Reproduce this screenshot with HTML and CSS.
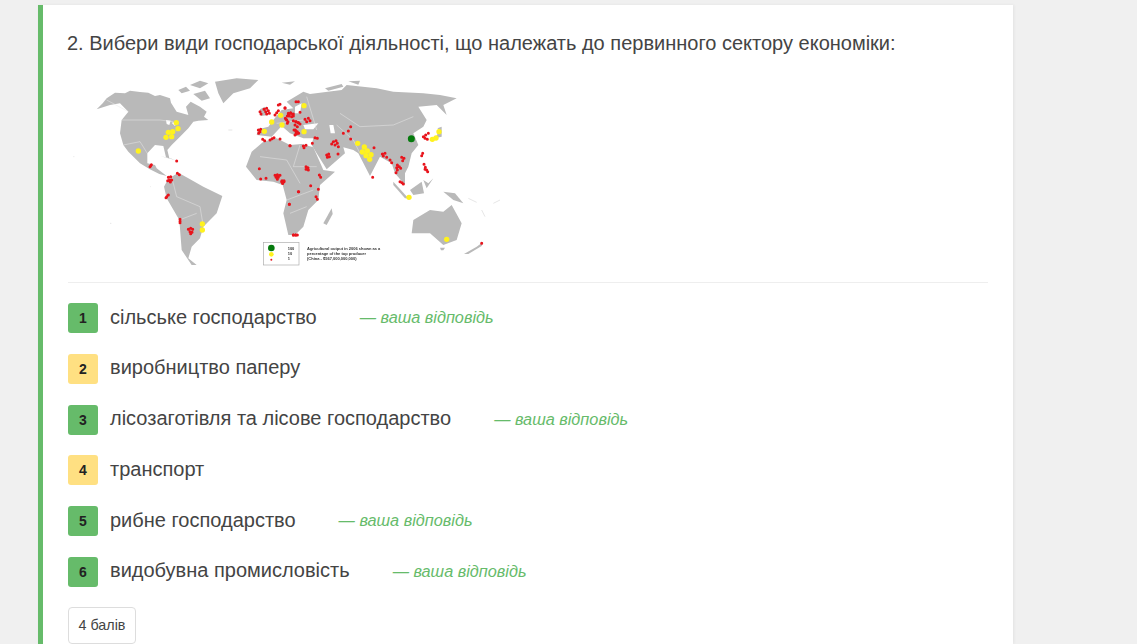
FILE: index.html
```html
<!DOCTYPE html>
<html>
<head>
    <title>Тест</title>
    <link rel="stylesheet" href="styles.css">
</head>
<body>
    <div class="card">
        <p class="question">2. Вибери види господарської діяльності, що належать до первинного сектору економіки:</p>
        <svg class="map" viewBox="24 9 1350 600" width="450" height="200">
            <g class="land">
                <!-- americas -->
                <polygon points="110,118 128,100 140,85 165,68 195,70 210,62 240,66 265,68 285,78 300,75 330,85 333,98 350,125 385,135 378,110 392,95 420,110 440,125 432,140 445,150 415,152 400,155 385,175 360,200 335,225 322,240 328,265 318,262 310,228 285,225 262,250 262,280 285,285 290,295 320,318 298,312 268,297 240,280 205,245 190,225 180,190 185,150 205,125 180,100 150,105"/>
                <polygon points="320,335 335,320 355,308 385,325 430,350 487,378 470,430 430,470 420,505 395,530 385,565 410,585 395,585 365,540 358,450 320,385 312,350"/>
                <polygon points="465,35 530,25 595,30 570,55 520,70 490,100 475,70"/>
                <polygon points="355,60 378,50 390,62 365,70"/>
                <polygon points="390,45 420,32 445,40 420,55"/>
                <polygon points="400,72 435,62 450,85 425,92"/>
                <polygon points="300,258 335,266 345,270 322,264"/>
                <polygon points="665,38 705,34 690,44"/>
                <!-- africa -->
                <polygon points="558,290 575,245 610,215 650,205 690,225 725,222 760,232 790,300 825,305 780,345 775,390 745,420 730,470 705,495 685,495 670,430 680,390 668,345 640,335 590,330"/>
                <!-- eurasia -->
                <polygon points="590,195 595,178 625,170 640,150 665,120 700,115 680,95 730,65 750,72 845,60 860,45 950,55 1000,65 1090,70 1140,75 1190,85 1150,105 1160,135 1130,105 1075,110 1100,150 1090,170 1060,190 1075,225 1055,250 1045,290 1035,310 1035,345 1005,310 995,280 960,260 930,318 895,250 880,240 850,232 855,250 800,298 770,250 755,225 760,205 730,205 690,190 665,168 635,200"/>
                <polygon points="795,55 845,42 850,50 805,62"/>
                <polygon points="865,34 900,32 895,44"/>
                <!-- islands -->
                <polygon points="600,118 615,110 625,135 603,138"/>
                <polygon points="1000,335 1045,385 1035,385 1000,345"/>
                <polygon points="1050,360 1085,335 1092,370 1060,375"/>
                <polygon points="1125,205 1140,180 1132,175 1145,170 1145,200"/>
                <polygon points="1150,365 1185,370 1210,400 1180,390"/>
                <polygon points="1055,490 1060,450 1110,420 1150,425 1175,405 1205,460 1190,510 1150,525 1110,490"/>
                <polygon points="1140,533 1155,533 1150,541 1143,541"/>
                <polygon points="1212,552 1250,530 1270,515 1265,528 1225,552"/>
                <polygon points="790,460 815,415 818,432 800,465"/>
                <polygon points="1090,330 1105,340 1120,325 1100,355"/>
            </g>
            <g class="water">
                <polygon points="318,150 332,152 328,165 320,162"/>
                <polygon points="335,158 350,155 345,168"/>
                <polygon points="730,165 775,160 760,178 735,178"/>
                <polygon points="808,165 820,165 825,190 812,190"/>
                <polygon points="705,110 725,100 720,130 705,130"/>
            </g>
            <path class="borders" d="M185 150L300 150 340 155M205 125L140 90M262 250L240 215 190 225M335 320L350 380 420 410 430 470M358 450L410 430M600 260L680 270 720 340M720 225L700 290 770 290M680 390L760 360M690 430L740 410M840 130L900 170 1000 165 1060 140M830 165L880 210 900 250M740 80L770 180M650 160L730 150"/>
            <path class="specks" d="M1225 385l25 12M1265 420l10 20M1300 400l20 -10M40 260h3M505 180h12M270 350h2M150 460h4"/>
            <path class="dots-red" d="M600 125h.1M603 132h.1M612 118h.1M620 115h.1M617 125h.1M625 122h.1M620 132h.1M628 130h.1M595 180h.1M600 185h.1M596 190h.1M602 178h.1M608 208h.1M614 212h.1M630 210h.1M636 206h.1M642 203h.1M660 207h.1M690 227h.1M660 103h.1M655 105h.1M675 115h.1M645 135h.1M650 128h.1M655 122h.1M685 132h.1M692 130h.1M698 133h.1M688 138h.1M700 138h.1M680 150h.1M676 145h.1M684 155h.1M708 155h.1M715 158h.1M720 162h.1M706 180h.1M712 185h.1M716 190h.1M708 192h.1M350 273h.1M270 290h.1M274 284h.1M272 287h.1M352 310h.1M358 314h.1M325 322h.1M332 320h.1M328 330h.1M335 330h.1M331 336h.1M323 332h.1M320 380h.1M325 375h.1M318 383h.1M360 448h.1M360 454h.1M360 458h.1M385 478h.1M392 475h.1M398 478h.1M390 485h.1M396 487h.1M392 491h.1M598 296h.1M602 327h.1M618 325h.1M645 316h.1M652 314h.1M660 316h.1M648 322h.1M655 322h.1M652 328h.1M666 332h.1M672 335h.1M668 340h.1M688 403h.1M716 365h.1M700 495h.1M707 495h.1M712 495h.1"/>
            <g transform="translate(660 0)">
                <path class="dots-red" d="M48 95h.1M55 95h.1M60 127h.1M15 113h.1M25 130h.1M32 128h.1M40 132h.1M22 138h.1M35 140h.1M18 148h.1M40 152h.1M48 155h.1M55 158h.1M45 165h.1M52 170h.1M22 160h.1M42 180h.1M48 185h.1M52 190h.1M45 195h.1M75 148h.1M85 145h.1M90 152h.1M80 155h.1M30 227h.1M70 228h.1M78 226h.1M72 233h.1M105 203h.1M112 205h.1M97 220h.1M160 215h.1M168 212h.1M172 220h.1M165 225h.1M175 230h.1M155 222h.1M190 190h.1M205 183h.1M212 170h.1M212 207h.1M140 255h.1M146 252h.1M142 262h.1M148 260h.1M78 290h.1M84 293h.1M78 298h.1M85 300h.1M118 315h.1M122 322h.1M174 252h.1M5 335h.1M12 332h.1M8 340h.1M55 365h.1M92 347h.1M115 358h.1M108 380h.1M112 388h.1M28 403h.1M40 495h.1M47 495h.1M282 233h.1M307 252h.1M315 250h.1M310 258h.1M320 262h.1M330 270h.1M335 278h.1M365 262h.1M372 265h.1M368 272h.1M352 285h.1M358 290h.1M350 293h.1M362 295h.1M352 300h.1M348 308h.1M278 322h.1M360 335h.1M366 338h.1M370 342h.1M430 200h.1M437 195h.1M445 190h.1M435 205h.1M442 208h.1M428 250h.1M425 257h.1M432 283h.1M436 292h.1M440 300h.1M435 298h.1M443 305h.1M605 520h.1"/>
            </g>
            <g class="dots-yellow">
                <circle cx="349" cy="158" r="8"/><circle cx="354" cy="176" r="8"/><circle cx="338" cy="185" r="8"/><circle cx="325" cy="187" r="8"/><circle cx="335" cy="200" r="8"/><circle cx="318" cy="202" r="8"/><circle cx="235" cy="243" r="8"/>
                <circle cx="427" cy="462" r="8"/><circle cx="427" cy="480" r="8"/><circle cx="613" cy="184" r="8"/><circle cx="635" cy="156" r="8"/><circle cx="662" cy="136" r="8"/><circle cx="666" cy="165" r="8"/><circle cx="732" cy="107" r="8"/><circle cx="732" cy="185" r="8"/>
                <circle cx="893" cy="220" r="8"/><circle cx="913" cy="231" r="8"/><circle cx="922" cy="243" r="8"/><circle cx="907" cy="246" r="8"/><circle cx="933" cy="254" r="8"/><circle cx="918" cy="257" r="8"/><circle cx="929" cy="268" r="8"/>
                <circle cx="1117" cy="208" r="8"/><circle cx="1128" cy="204" r="8"/><circle cx="1137" cy="185" r="8"/><circle cx="1047" cy="382" r="8"/><circle cx="1160" cy="508" r="8"/>
            </g>
            <circle class="dot-green" cx="1054" cy="206" r="10.5"/>
            <rect class="legend" x="610" y="517" width="107" height="68"/>
            <circle class="dot-green" cx="634" cy="534" r="10"/>
            <circle class="dots-yellow" cx="634" cy="553" r="7"/>
            <circle class="dots-red-one" cx="634" cy="569" r="3"/>
            <text class="legend-num" x="683" y="541">100</text>
            <text class="legend-num" x="683" y="556">10</text>
            <text class="legend-num" x="683" y="571">1</text>
            <text class="legend-text" x="741" y="541">Agricultural output in 2006 shown as a</text>
            <text class="legend-text" x="741" y="556">percentage of the top producer</text>
            <text class="legend-text" x="741" y="571">(China - $567,000,000,000)</text>
        </svg>
        <div class="divider"></div>
        <ul class="answers">
            <li class="answer"><span class="num num-right">1</span><span class="label">сільське господарство</span><em class="yours">— ваша відповідь</em></li>
            <li class="answer"><span class="num num-wrong">2</span><span class="label">виробництво паперу</span></li>
            <li class="answer"><span class="num num-right">3</span><span class="label">лісозаготівля та лісове господарство</span><em class="yours">— ваша відповідь</em></li>
            <li class="answer"><span class="num num-wrong">4</span><span class="label">транспорт</span></li>
            <li class="answer"><span class="num num-right">5</span><span class="label">рибне господарство</span><em class="yours">— ваша відповідь</em></li>
            <li class="answer"><span class="num num-right">6</span><span class="label">видобувна промисловість</span><em class="yours">— ваша відповідь</em></li>
        </ul>
        <div class="points">4 балів</div>
    </div>
</body>
</html>
```

FILE: styles.css
```css
html, body {
    height: 100%;
}
body {
    margin: 0;
    padding: 5px 0 0 38px;
    box-sizing: border-box;
    height: 644px;
    overflow: hidden;
    background: #f0f0f0;
    font-family: "Liberation Sans", Arial, sans-serif;
    color: #444;
}
.card {
    width: 975px;
    height: 639px;
    box-sizing: border-box;
    padding: 25px 25px 0 25px;
    background: #fff;
    border-left: 5px solid #66bb6a;
    box-shadow: 1px 0 3px rgba(0, 0, 0, 0.06);
}
.question {
    margin: 0 0 0 -1px;
    font-size: 20px;
    line-height: 27px;
}
.map {
    display: block;
    margin-top: 16px;
    filter: blur(0.35px);
}
.land polygon {
    fill: #b9b9b9;
}
.water polygon {
    fill: #fff;
}
.borders {
    fill: none;
    stroke: #e8e8e8;
    stroke-width: 1.5;
}
.specks {
    fill: none;
    stroke: #e6e6e6;
    stroke-width: 3;
}
.dots-red {
    fill: none;
    stroke: #e8141c;
    stroke-width: 9;
    stroke-linecap: round;
}
.dots-red-one {
    fill: #e8141c;
}
.dots-yellow {
    fill: #fff21e;
}
.dot-green {
    fill: #057a0d;
}
.legend {
    fill: #fff;
    stroke: #aaa;
    stroke-width: 2;
}
.legend-num, .legend-text {
    font-size: 12px;
    font-weight: bold;
    fill: #333;
}
.divider {
    margin-top: 9px;
    border-top: 1px solid #eee;
}
.answers {
    list-style: none;
    margin: 20px 0 0 0;
    padding: 0;
}
.answer {
    display: flex;
    align-items: center;
    height: 30px;
    margin-bottom: 20.8px;
    font-size: 20px;
}
.num {
    width: 30px;
    height: 30px;
    margin-right: 12px;
    border-radius: 3px;
    font-size: 14px;
    font-weight: bold;
    line-height: 30px;
    text-align: center;
    color: #222;
}
.num-right {
    background: #66bb6a;
}
.num-wrong {
    background: #ffe082;
}
.label {
    margin-bottom: 2px;
}
.yours {
    margin-left: 43px;
    margin-bottom: 1px;
    font-size: 16.3px;
    color: #66bb6a;
}
.points {
    display: inline-block;
    margin-top: -1px;
    padding: 0 9px;
    height: 35px;
    min-width: 48px;
    line-height: 35px;
    text-align: center;
    border: 1px solid #ddd;
    border-radius: 4px;
    font-size: 14.3px;
}
```
